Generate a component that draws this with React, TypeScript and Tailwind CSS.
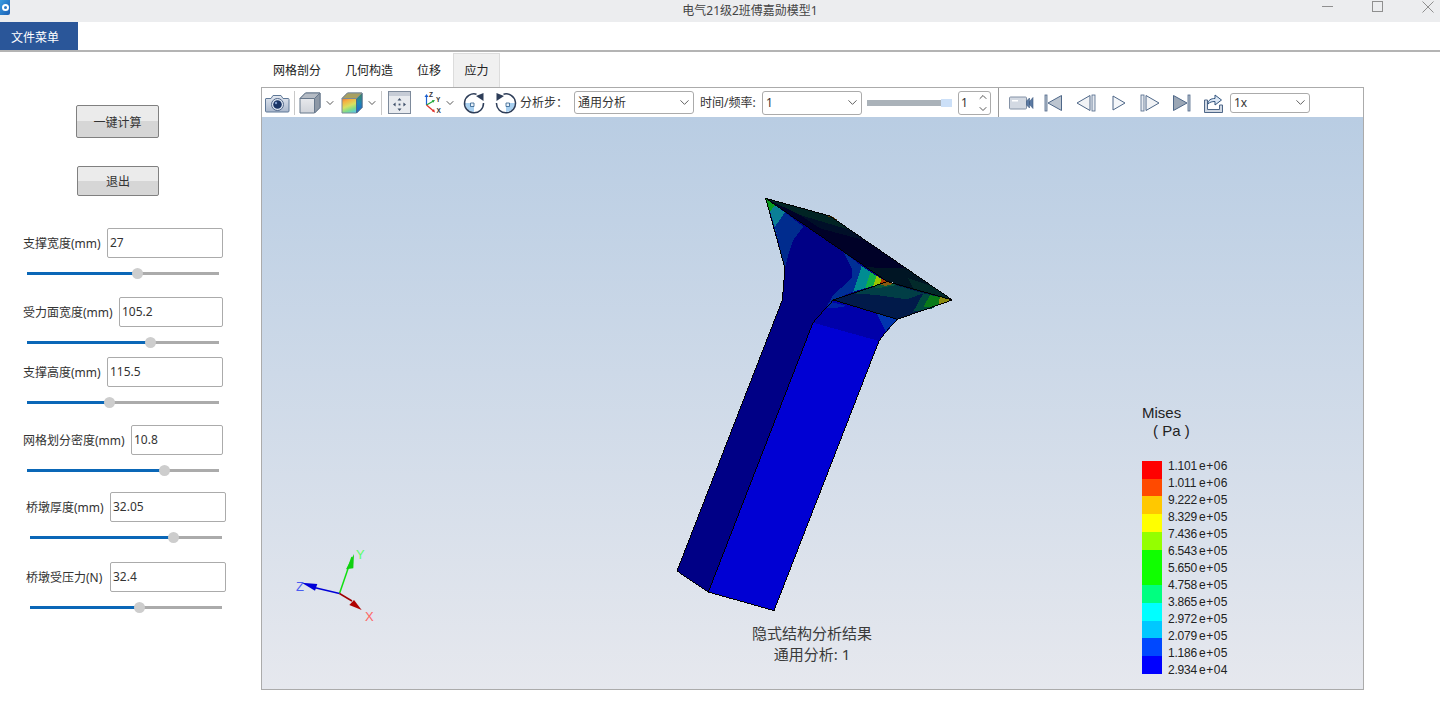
import React from "react";
import { ChevronDown, ChevronUp } from "lucide-react";

const FONT = "font-['Noto_Sans','Noto_Sans_CJK_SC',sans-serif]";

function Slider({ left, fillW }: { left: string; fillW: string }) {
  return (
    <div className={`flex h-3 w-[192px] items-center mt-[9px] ${left}`}>
      <div className={`h-[3px] bg-[#0a67b7] ${fillW}`} />
      <div className="-mx-[5px] z-10 h-[11px] w-[11px] shrink-0 rounded-full bg-[#cdcdcd]" />
      <div className="h-[3px] flex-1 bg-[#ababab]" />
    </div>
  );
}

function ParamRow({ label, value, mt, pl, labelW, inputW }: { label: string; value: string; mt: string; pl: string; labelW: string; inputW: string }) {
  return (
    <div className={`flex h-[30px] items-center ${mt} ${pl}`}>
      <span className={`pt-[2px] text-[12px] leading-none text-[#333] whitespace-nowrap ${labelW}`}>{label}</span>
      <div className={`flex h-[30px] items-center rounded-[2px] border border-[#ababab] bg-white pl-[2px] text-[12px] text-[#333] ${inputW}`}>{value}</div>
    </div>
  );
}

function Sep({ ml, mr }: { ml: string; mr: string }) {
  return <div className={`h-[24px] w-px bg-[#c8c8c8] ${ml} ${mr}`} />;
}

function Chev({ cls }: { cls: string }) {
  return <ChevronDown className={`h-[12px] w-[12px] text-[#444] ${cls}`} strokeWidth={1.8} />;
}

function SelectBox({ text, w, h, ml }: { text: string; w: string; h: string; ml: string }) {
  return (
    <div className={`flex items-center justify-between rounded-[3px] border border-[#ababab] bg-white pl-[3px] pr-[1px] text-[12px] text-[#333] ${w} ${h} ${ml}`}>
      <span>{text}</span>
      <ChevronDown className="h-[15px] w-[15px] text-[#555]" strokeWidth={1.5} />
    </div>
  );
}

function IconCamera() {
  return (
    <svg width="25" height="20" viewBox="0 0 25 20" className="ml-[3px]">
      <defs>
        <linearGradient id="cam" x1="0" y1="0" x2="0" y2="1"><stop offset="0" stopColor="#e4e9f1" /><stop offset="1" stopColor="#a9b7cc" /></linearGradient>
      </defs>
      <path d="M1 5.5h5l2-3h8l2 3h5.5a.8.8 0 0 1 .5.8V18a1 1 0 0 1-1 1H1.5a1 1 0 0 1-1-1V6a.6.6 0 0 1 .5-.5z" fill="url(#cam)" stroke="#5f7897" />
      <circle cx="12.5" cy="11.5" r="6" fill="#dfe7f2" stroke="#52688a" />
      <circle cx="12.5" cy="11.5" r="4.3" fill="#1a3566" />
      <circle cx="11" cy="10" r="1.2" fill="#7f9ccc" />
    </svg>
  );
}

function IconCube({ color }: { color?: boolean }) {
  return (
    <svg width="22" height="22" viewBox="0 0 22 22">
      <defs>
        <linearGradient id="cf" x1="0.2" y1="0" x2="0.6" y2="1"><stop offset="0" stopColor="#e2402e" /><stop offset=".35" stopColor="#f6b040" /><stop offset=".6" stopColor="#d8e060" /><stop offset=".8" stopColor="#7fdc8a" /><stop offset="1" stopColor="#55c8ea" /></linearGradient>
        <linearGradient id="cs" x1="0" y1="0" x2="0" y2="1"><stop offset="0" stopColor="#3f8a50" /><stop offset=".5" stopColor="#1d86b8" /><stop offset="1" stopColor="#1f5fd0" /></linearGradient>
        <linearGradient id="gf" x1="0" y1="0" x2="0" y2="1"><stop offset="0" stopColor="#f0f1f3" /><stop offset="1" stopColor="#cfd3d9" /></linearGradient>
      </defs>
      <path d="M1 6.5 6.5 1H21v14.5L15.5 21H1z" fill={color ? "url(#cf)" : "url(#gf)"} stroke={color ? "#7b8a96" : "#67788c"} />
      <path d="M15.5 6.5 21 1v14.5L15.5 21z" fill={color ? "url(#cs)" : "#8d98a6"} stroke={color ? "#4a6a8a" : "#67788c"} />
      <path d="M1 6.5 6.5 1H21l-5.5 5.5z" fill={color ? "#a8a060" : "#b4bbc4"} stroke={color ? "#7b8a96" : "#67788c"} />
    </svg>
  );
}

function IconFit() {
  return (
    <svg width="23" height="23" viewBox="0 0 23 23" className="ml-[6px]">
      <rect x=".5" y=".5" width="22" height="22" fill="#e8ebef" stroke="#7d8a9b" />
      <rect x="1" y="1" width="21" height="4" fill="#c6ccd6" />
      <g fill="#41526b">
        <path d="M11.5 7l2 2.6h-4zM11.5 20l2-2.6h-4zM5 13.5l2.6-2v4zM18 13.5l-2.6-2v4z" />
        <rect x="10.6" y="12.6" width="1.8" height="1.8" />
      </g>
    </svg>
  );
}

function IconAxes() {
  return (
    <svg width="22" height="23" viewBox="0 0 22 23" className="ml-[10px]">
      <path d="M5.5 14V5" stroke="#1c5fd0" strokeWidth="1.2" />
      <path d="M5.5 3l2 3h-4z" fill="#1c5fd0" />
      <path d="M5.5 14l7-4" stroke="#22a83a" strokeWidth="1.2" />
      <path d="M14 9l-3.2.2 1.4 2.6z" fill="#22a83a" />
      <path d="M5.5 14l7 6" stroke="#e0302a" strokeWidth="1.2" />
      <path d="M14 21.5l-1-3.4-2 2.2z" fill="#e0302a" />
      <text x="8" y="6" fontSize="6.5" fontWeight="600" fill="#333" fontFamily="Liberation Sans">Z</text>
      <text x="15" y="11" fontSize="6.5" fontWeight="600" fill="#333" fontFamily="Liberation Sans">Y</text>
      <text x="15.5" y="21.5" fontSize="6.5" fontWeight="600" fill="#333" fontFamily="Liberation Sans">X</text>
    </svg>
  );
}

function IconRotate({ flip, ml }: { flip?: boolean; ml: string }) {
  return (
    <svg width="22" height="22" viewBox="0 0 22 22" className={`${ml} ${flip ? "-scale-x-100" : ""}`}>
      <path d="M2 11H11V20A9 9 0 0 1 2 11z" fill="#a8d0f0" />
      <path d="M13.5 2.2A9.5 9.5 0 1 0 20.5 11" fill="none" stroke="#2d3d58" strokeWidth="1.5" />
      <path d="M20.5 1v8l-7.5-5z" fill="#2d3d58" />
      <path d="M7.5 11h3.5v3.5h-3.5z" fill="#e8f2fb" stroke="#2d5d8a" strokeWidth=".8" />
    </svg>
  );
}

function IconVideo() {
  return (
    <svg width="25" height="14" viewBox="0 0 25 14" className="ml-[10px]">
      <rect x=".5" y="1" width="17" height="12" rx="1" fill="#d3d9e2" stroke="#8492a6" />
      <rect x="3" y="4" width="6" height="1.5" fill="#fff" />
      <path d="M17.5 5l3-3v10l-3-3z M24 1.5v11l-3.5-4v-3z" fill="#5b7aa3" stroke="#3f5a80" strokeWidth=".6" />
    </svg>
  );
}

function Media({ kind, ml }: { kind: "first" | "prev" | "play" | "next" | "last"; ml: string }) {
  const s = "#4e6788";
  return (
    <svg width="22" height="18" viewBox="0 0 22 18" className={ml}>
      {kind === "first" && <><rect x="2" y="1" width="2" height="16" fill="#bcc6d3" stroke={s} strokeWidth=".8" /><path d="M18.5 1.5v15L5 9z" fill="#bcc5d0" stroke={s} /></>}
      {kind === "prev" && <><rect x="17" y="1" width="3" height="16" fill="#e6eaf0" stroke={s} strokeWidth=".8" /><path d="M15 1.5v15L2 9z" fill="#f1f3f6" stroke={s} /></>}
      {kind === "play" && <path d="M5 2v14l12-7z" fill="#f4f6f9" stroke={s} />}
      {kind === "next" && <><rect x="2" y="1" width="3" height="16" fill="#e6eaf0" stroke={s} strokeWidth=".8" /><path d="M7 1.5v15L20 9z" fill="#f1f3f6" stroke={s} /></>}
      {kind === "last" && <><rect x="18" y="1" width="2" height="16" fill="#bcc6d3" stroke={s} strokeWidth=".8" /><path d="M3.5 1.5v15L17 9z" fill="#9aa6b5" stroke={s} /></>}
    </svg>
  );
}

function IconExport() {
  return (
    <svg width="20" height="20" viewBox="0 0 20 20" className="ml-[11px]">
      <path d="M1.5 7h3v9.5h12V12h3v7.5h-18z" fill="#cfd7e2" stroke="#4e6788" />
      <path d="M5 11c0-4 3-5.5 7-5.5V2l6.5 5-6.5 5V8.5c-3 0-5 .5-7 2.5z" fill="#dbe7f5" stroke="#33557f" />
    </svg>
  );
}

function Toolbar() {
  return (
    <div className="flex h-[29px] items-center">
      <IconCamera />
      <Sep ml="ml-[4px]" mr="mr-[4px]" />
      <IconCube />
      <Chev cls="ml-[3px]" />
      <div className="ml-[5px]"><IconCube color /></div>
      <Chev cls="ml-[3px]" />
      <Sep ml="ml-[3px]" mr="mr-0" />
      <IconFit />
      <IconAxes />
      <Chev cls="ml-[1px]" />
      <IconRotate ml="ml-[7px]" />
      <IconRotate flip ml="ml-[10px]" />
      <span className="ml-[3px] w-[54px] text-[12px] text-[#333] whitespace-nowrap">分析步：</span>
      <SelectBox text="通用分析" w="w-[120px]" h="h-[23px]" ml="ml-0" />
      <span className="ml-[6px] w-[62px] text-[12px] text-[#333] whitespace-nowrap">时间/频率:</span>
      <SelectBox text="1" w="w-[100px]" h="h-[24px]" ml="ml-0" />
      <div className="ml-[5px] flex h-[6px] w-[85px]">
        <div className="h-[6px] flex-1 bg-[#aab2b9]" />
        <div className="h-[8px] -mt-px w-[11px] bg-[#cce0f8]" />
      </div>
      <div className="ml-[6px] flex h-[24px] w-[33px] items-center justify-between rounded-[3px] border border-[#ababab] bg-white pl-[2px] text-[12px] text-[#333]">
        <span>1</span>
        <div className="flex flex-col">
          <ChevronUp className="h-[12px] w-[14px] text-[#444]" strokeWidth={1.8} />
          <ChevronDown className="h-[12px] w-[14px] text-[#444]" strokeWidth={1.8} />
        </div>
      </div>
      <div className="ml-[7px] h-[29px] w-px bg-[#9a9a9a]" />
      <IconVideo />
      <Media kind="first" ml="ml-[9px]" />
      <Media kind="prev" ml="ml-[10px]" />
      <Media kind="play" ml="ml-[11px]" />
      <Media kind="next" ml="ml-[9px]" />
      <Media kind="last" ml="ml-[9px]" />
      <IconExport />
      <SelectBox text="1x" w="w-[80px]" h="h-[20px]" ml="ml-[7px]" />
    </div>
  );
}

function Model() {
  return (
    <g transform="translate(660 180) scale(.33333)" shapeRendering="crispEdges">
      <polygon points="317,55 375,265 367,360 51,1173 145,1236 459,428 497,385 520,360 682,305" fill="#000086" />
      <polygon points="317,55 345,75 330,95" fill="#0a9a20" />
      <polygon points="345,75 375,97 345,140 330,95" fill="#0a7f96" />
      <polygon points="330,95 345,140 375,265 362,205" fill="#0a6a9a" />
      <polygon points="375,97 430,140 400,180 385,225 375,265 345,140" fill="#002c8e" />
      <polygon points="550,215 605,258 580,335 520,360 497,385 520,345 575,295 575,265" fill="#002f95" />
      <polygon points="605,258 632,276 615,325 580,335" fill="#008c92" />
      <polygon points="632,276 650,288 640,318 615,325" fill="#10b048" />
      <polygon points="650,288 665,297 660,312 640,318" fill="#9ac400" />
      <polygon points="665,297 684,305 660,312" fill="#b03a00" />

      <polygon points="317,55 510,108 877,360 672,300" fill="#000128" />
      <polygon points="317,55 510,108 570,150 420,105" fill="#012424" />
      <polygon points="420,105 570,150 610,180 480,145" fill="#000f28" />
      <polygon points="490,103 515,108 535,122" fill="#5a3a08" />
      <polygon points="620,262 740,265 877,360 680,302" fill="#001524" />
      <polygon points="745,295 820,320 877,360 760,325" fill="#022a2a" />
      <polygon points="317,55 345,75 330,62" fill="#0a5a20" />

      <polygon points="520,360 682,305 877,360 712,418" fill="#011a4a" />
      <polygon points="580,340 682,308 790,340 740,358 650,345" fill="#013e46" />
      <polygon points="640,318 684,306 710,315 650,325" fill="#0a5a3a" />
      <polygon points="660,312 684,306 700,312 675,318" fill="#8a5a10" />
      <polygon points="790,340 845,352 820,385 760,395" fill="#014a40" />
      <polygon points="810,345 860,356 830,378 790,382" fill="#0a7a18" />
      <polygon points="840,350 877,360 835,374" fill="#8a8a10" />

      <polygon points="459,428 497,385 520,360 712,418 657,483" fill="#0000aa" />
      <polygon points="497,385 510,365 560,378 520,385" fill="#0024a8" />
      <polygon points="650,400 712,418 678,455" fill="#0034ae" />
      <polygon points="459,428 657,483 342,1292 145,1236" fill="#0000d3" />

      <g fill="none" stroke="#000" strokeWidth="3">
        <polyline points="375,265 317,55 510,108 877,360 712,418 678,455 657,483 342,1292 145,1236 51,1173 367,360 375,265" />
        <polyline points="317,55 682,305 877,360" />
        <polyline points="682,305 520,360 712,418" />
        <polyline points="520,360 497,385 459,428 145,1236" />
      </g>
    </g>
  );
}

function Triad() {
  return (
    <g>
      <path d="M339.5 593.5L352 557" stroke="#10e010" strokeWidth="1.5" />
      <polygon points="354,554 353.3,568.3 346,569.3" fill="#10d010" />
      <path d="M339.5 593.5L312 587" stroke="#0000d8" strokeWidth="1.5" />
      <polygon points="301.7,582.7 317.3,584 315,590.7" fill="#0000d8" />
      <path d="M339.5 593.5L352 601" stroke="#a00000" strokeWidth="1.5" />
      <polygon points="361.7,610 354,600 349.3,605" fill="#b00000" />
      <text x="356" y="559" fontSize="13" fill="#5cff6a" fontFamily="Liberation Sans">Y</text>
      <text x="296" y="591" fontSize="13" fill="#4a5cf0" fontFamily="Liberation Sans">Z</text>
      <text x="365" y="621" fontSize="13" fill="#ff6464" fontFamily="Liberation Sans">X</text>
    </g>
  );
}

const swatches = [
  { c: "bg-[#ff0000]", h: "h-[18px]" },
  { c: "bg-[#ff4a00]", h: "h-[17px]" },
  { c: "bg-[#ffc800]", h: "h-[18px]" },
  { c: "bg-[#ffff00]", h: "h-[18px]" },
  { c: "bg-[#94ff00]", h: "h-[18px]" },
  { c: "bg-[#10ff00]", h: "h-[35px]" },
  { c: "bg-[#00ff80]", h: "h-[18px]" },
  { c: "bg-[#00ffff]", h: "h-[18px]" },
  { c: "bg-[#00c8ff]", h: "h-[17px]" },
  { c: "bg-[#0048ff]", h: "h-[18px]" },
  { c: "bg-[#0000ff]", h: "h-[18px]" },
];

const legendVals = [
  ["1.101", "e+06"], ["1.011", "e+06"], ["9.222", "e+05"], ["8.329", "e+05"], ["7.436", "e+05"], ["6.543", "e+05"], ["5.650", "e+05"],
  ["4.758", "e+05"], ["3.865", "e+05"], ["2.972", "e+05"], ["2.079", "e+05"], ["1.186", "e+05"], ["2.934", "e+04"],
];

function Legend() {
  return (
    <div className="absolute left-[880px] top-[287px] font-['Liberation_Sans',sans-serif] text-[#222]">
      <div className="text-[15px] leading-[17px]">Mises</div>
      <div className="pl-[11px] text-[15px] leading-[17px] mt-px whitespace-pre">( Pa )</div>
      <div className="mt-[22px] flex">
        <div className="flex w-[20px] flex-col">
          {swatches.map((s) => <div key={s.c} className={`${s.c} ${s.h}`} />)}
        </div>
        <div className="ml-[6px] -mt-[3px] flex flex-col text-[12px] leading-[17px]">
          {legendVals.map(([a, b]) => (
            <div key={a} className="flex whitespace-nowrap"><span className="w-[31px] tracking-[-0.2px]">{a}</span><span className="tracking-[0.5px]">{b}</span></div>
          ))}
        </div>
      </div>
    </div>
  );
}

function Canvas() {
  return (
    <div className="relative flex-1 overflow-hidden bg-gradient-to-b from-[#b9cde3] to-[#e6e8ee]">
      <svg className="absolute inset-0" width="1101" height="572" viewBox="262 117 1101 572">
        <Model />
        <Triad />
      </svg>
      <Legend />
      <div className="absolute left-[470px] top-[506px] w-[160px] text-center text-[15px] leading-[21px] text-[#3a3a3a]">
        <div>隐式结构分析结果</div>
        <div>通用分析: 1</div>
      </div>
    </div>
  );
}

export default function App() {
  return (
    <div className={`flex h-[725px] w-[1440px] flex-col overflow-hidden bg-white ${FONT}`}>
      <div className="flex h-[22px] items-center bg-[#ecedef]">
        <div className="self-start flex h-[15px] w-[10px] items-center justify-end rounded-br-[2px] bg-gradient-to-br from-[#3b9be0] to-[#1b5fb4] pr-[1px]">
          <div className="h-[7px] w-[7px] rounded-full border-2 border-white" />
        </div>
        <div className="ml-[672px] w-[136px] text-center text-[12px] text-[#444] whitespace-nowrap">电气21级2班傅嘉勋模型1</div>
        <div className="ml-[504px] h-px w-[11px] self-start mt-[6px] bg-[#8f8f8f]" />
        <div className="ml-[39px] h-[11px] w-[11px] self-start mt-px border border-[#8f8f8f]" />
        <svg width="12" height="12" viewBox="0 0 12 12" className="ml-[39px] self-start mt-px"><path d="M.5.5l11 11M11.5.5l-11 11" stroke="#8f8f8f" /></svg>
      </div>
      <div className="flex h-[28px] bg-white">
        <div className="flex w-[78px] items-center pl-[11px] pt-[3px] bg-[#2a5699] text-[12px] text-white">文件菜单</div>
      </div>
      <div className="h-[2px] bg-[#b4b4b4]" />
      <div className="flex flex-1">
        <div className="flex w-[261px] flex-col">
          <button className="mt-[53px] ml-[76px] h-[33px] w-[83px] rounded-[2px] border border-[#808080] bg-[linear-gradient(#ebebeb_0,#ebebeb_50%,#d6d6d6_50%,#d6d6d6_100%)] pt-[2px] text-[12px] text-[#333]">一键计算</button>
          <button className="mt-[28px] ml-[77px] h-[30px] w-[82px] rounded-[2px] border border-[#808080] bg-[linear-gradient(#ebebeb_0,#ebebeb_50%,#d6d6d6_50%,#d6d6d6_100%)] pt-[2px] text-[12px] text-[#333]">退出</button>
          <ParamRow label="支撑宽度(mm)" value="27" mt="mt-[32px]" pl="pl-[23px]" labelW="w-[84px]" inputW="w-[116px]" />
          <Slider left="ml-[27px]" fillW="w-[110px]" />
          <ParamRow label="受力面宽度(mm)" value="105.2" mt="mt-[18px]" pl="pl-[23px]" labelW="w-[96px]" inputW="w-[104px]" />
          <Slider left="ml-[27px]" fillW="w-[123px]" />
          <ParamRow label="支撑高度(mm)" value="115.5" mt="mt-[9px]" pl="pl-[23px]" labelW="w-[84px]" inputW="w-[116px]" />
          <Slider left="ml-[27px]" fillW="w-[82px]" />
          <ParamRow label="网格划分密度(mm)" value="10.8" mt="mt-[17px]" pl="pl-[23px]" labelW="w-[108px]" inputW="w-[92px]" />
          <Slider left="ml-[27px]" fillW="w-[137px]" />
          <ParamRow label="桥墩厚度(mm)" value="32.05" mt="mt-[16px]" pl="pl-[26px]" labelW="w-[84px]" inputW="w-[116px]" />
          <Slider left="ml-[30px]" fillW="w-[143px]" />
          <ParamRow label="桥墩受压力(N)" value="32.4" mt="mt-[19px]" pl="pl-[26px]" labelW="w-[84px]" inputW="w-[116px]" />
          <Slider left="ml-[30px]" fillW="w-[109px]" />
        </div>
        <div className="flex flex-1 flex-col">
          <div className="flex h-[35px] text-[12px] text-[#222]">
            <div className="ml-[12px] flex items-center pt-[2px]">网格剖分</div>
            <div className="ml-[24px] flex items-center pt-[2px]">几何构造</div>
            <div className="ml-[24px] flex items-center pt-[2px]">位移</div>
            <div className="ml-[12px] mt-px flex w-[47px] items-center justify-center border border-[#dcdcdc] border-b-0 bg-[#f0f0f0] pt-[1px]">应力</div>
          </div>
          <div className="flex h-[603px] w-[1103px] flex-col border border-[#ababab]">
            <Toolbar />
            <Canvas />
          </div>
        </div>
      </div>
    </div>
  );
}
